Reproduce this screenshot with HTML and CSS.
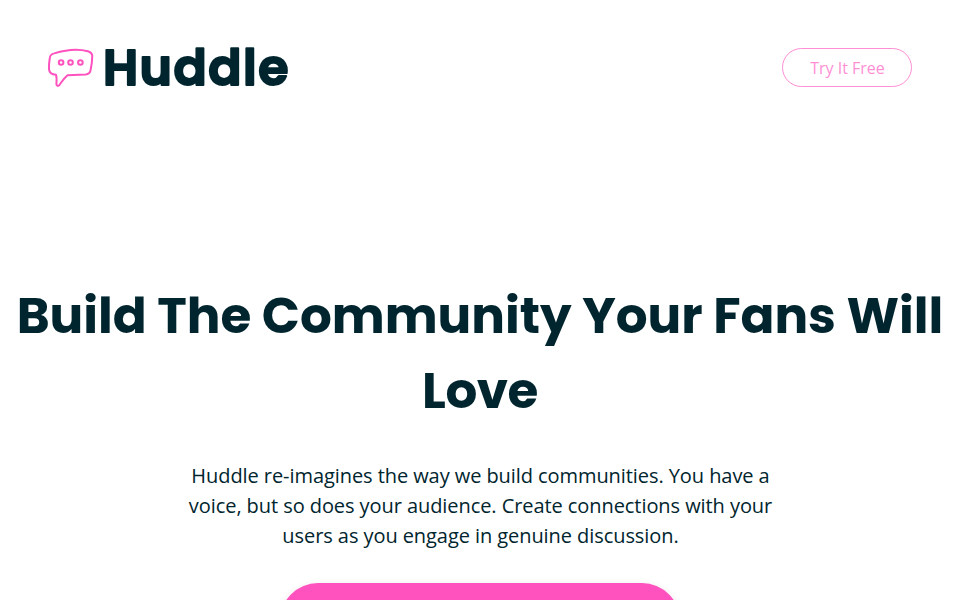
FILE: index.html
```html
<!DOCTYPE html>
<html lang="en">
<head>
<meta charset="utf-8">
<title>Huddle</title>
<link rel="stylesheet" href="styles.css">
</head>
<body>
<header class="header">
  <svg class="logo" width="242" height="44" viewBox="0 0 242 44" role="img" aria-label="Huddle">
    <g class="bubble" transform="translate(0 .5)">
      <path d="M8 28.3C3.7 28 1.3 26.5 1 22.6C.7 18.2 1.3 14.6 1.8 11.4C2.1 8.7 3.5 7.6 6.2 6.9C17 3.6 30 2.2 39.8 4.8C43.3 5.7 44.6 7.2 44.2 10.6C44.2 15.2 43.4 20 42.5 24C41.9 26.7 40.5 27.7 37.8 27.9L19.5 28.7C15.8 31.8 13.7 35.5 11.3 38.6C9.9 40.1 8.3 39.2 8.4 37.3C8.7 34.2 8.9 31.1 8 28.3Z"/>
      <circle cx="13.1" cy="16" r="2.3"/>
      <circle cx="22.5" cy="16" r="2.3"/>
      <circle cx="32.4" cy="16" r="2.3"/>
    </g>
    <text class="wordmark" x="54.9" y="39.4" textLength="185.5">Huddle</text>
  </svg>
  <a class="try">Try It Free</a>
</header>
<main class="hero">
  <h1 class="title">Build The Community Your Fans Will <span class="title-end">Love</span></h1>
  <p class="intro">Huddle re-imagines the way we build communities. You have a voice, but so does your audience. Create connections with your users as you engage in genuine discussion.</p>
  <div class="cta"></div>
</main>
</body>
</html>
```
FILE: styles.css
```css
* { box-sizing: border-box; }
html { overflow: hidden; }
body {
  display: flex;
  flex-direction: column;
  margin: 0;
  height: 600px;
  overflow: hidden;
  background: #fff;
  color: #00252e;
  font-family: "Open Sans", sans-serif;
}
.header {
  display: flex;
  flex: none;
  justify-content: space-between;
  align-items: flex-start;
  height: 278px;
  padding: 48px 48px 0;
}
.logo { margin-top: -2px; overflow: visible; }
.bubble { fill: none; stroke: #ff52bf; stroke-width: 2; stroke-linejoin: round; }
.wordmark {
  font: 600 49px Poppins, Inter, sans-serif;
  fill: #00252e;
  stroke: #00252e;
  stroke-width: 2px;
  stroke-linejoin: round;
}
.try {
  width: 130px;
  height: 39px;
  padding-left: 1px;
  border: 1px solid #ff52bf;
  border-radius: 20px;
  color: #ff52bf;
  font-size: 16px;
  line-height: 38px;
  text-align: center;
  opacity: .65;
}
.hero {
  display: flex;
  flex: 1;
  flex-direction: column;
  align-items: center;
  min-height: 0;
  overflow: hidden;
}
.title {
  flex: none;
  width: 944px;
  margin: 0;
  font: 700 50px/75px Poppins, Inter, sans-serif;
  letter-spacing: -.02px;
  text-align: center;
}
.title-end { letter-spacing: -.5px; }
.intro {
  flex: none;
  width: 600px;
  margin: 33px 0 32px;
  padding-left: 1px;
  font-size: 20px;
  line-height: 30px;
  letter-spacing: -.07px;
  text-align: center;
}
.cta {
  flex: none;
  width: 400px;
  height: 76px;
  border-radius: 38px;
  background: #ff52bf;
  box-shadow: 0 3px 10px rgba(0, 0, 0, .12);
}
```
